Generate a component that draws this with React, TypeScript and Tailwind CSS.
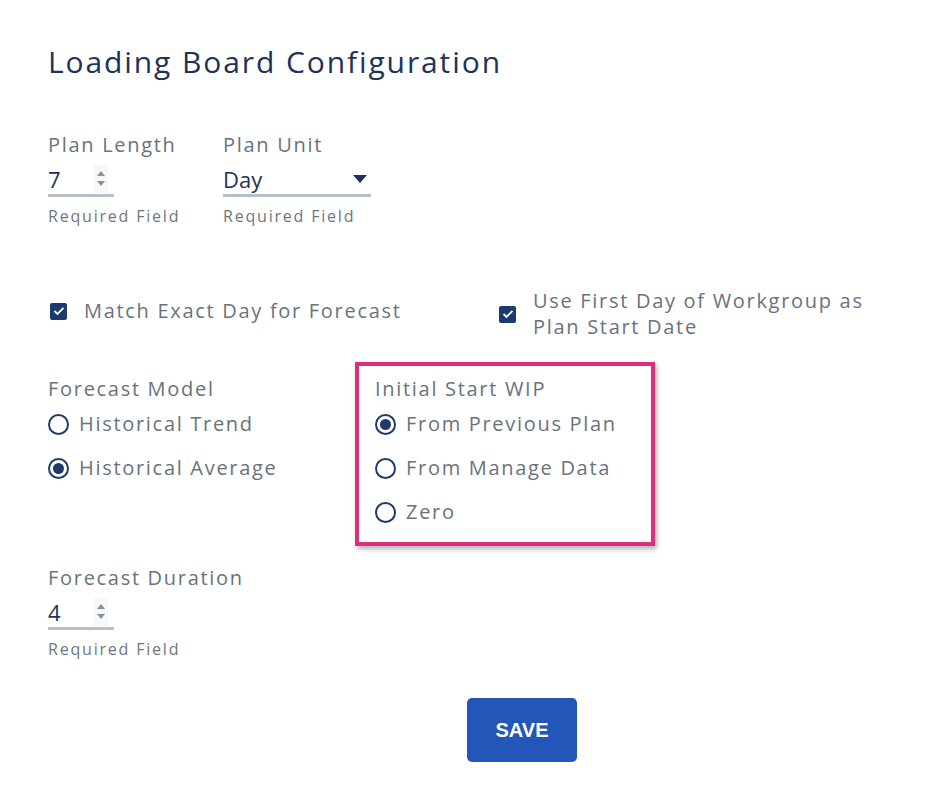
import { useState } from "react";

const font = { fontFamily: '"Open Sans", "Liberation Sans", sans-serif' };

const labelCls = "text-[20px] leading-[26px] text-[#68737b] tracking-[1.7px]";

function Spinner() {
  return (
    <svg width="14" height="28" viewBox="0 0 14 28" className="shrink-0">
      <rect x="0" y="0" width="14" height="28" fill="#f6f7f8" />
      <path d="M7 6 L11 11 L3 11 Z" fill="#8a9096" />
      <path d="M3 16 L11 16 L7 21 Z" fill="#8a9096" />
    </svg>
  );
}

function NumberField({ label, value }: { label: string; value: string }) {
  return (
    <div className="flex flex-col">
      <div className={labelCls}>{label}</div>
      <div className="mt-[9px] w-[66px] h-[30px] flex items-center justify-between border-b-[3px] border-[#b7c0c7] pr-[6px] pb-[4px]">
        <span className="text-[22px] text-[#1d3357] leading-none">{value}</span>
        <Spinner />
      </div>
      <div className="mt-[9px] text-[16px] leading-[20px] text-[#6e767d] tracking-[1.8px]">Required Field</div>
    </div>
  );
}

function Check({ children }: { children: React.ReactNode }) {
  return (
    <div className="flex items-center gap-[17px]">
      <div className="w-[17px] h-[17px] rounded-[2px] bg-[#1c3a6e] flex items-center justify-center shrink-0">
        <svg width="12" height="10" viewBox="0 0 12 10">
          <path d="M1.5 5 L4.5 8 L10.5 1.8" stroke="white" strokeWidth="1.8" fill="none" />
        </svg>
      </div>
      <div className={labelCls}>{children}</div>
    </div>
  );
}

function Radio({ label, checked, onClick }: { label: string; checked: boolean; onClick: () => void }) {
  return (
    <div className="flex items-center gap-[10px] h-[44px] cursor-pointer" onClick={onClick}>
      <div className="w-[21px] h-[21px] rounded-full border-2 border-[#1c3a6e] flex items-center justify-center">
        {checked && <div className="w-[11px] h-[11px] rounded-full bg-[#1c3a6e]" />}
      </div>
      <span className="text-[20px] text-[#68737b] tracking-[1.7px]">{label}</span>
    </div>
  );
}

export default function App() {
  const [model, setModel] = useState("avg");
  const [wip, setWip] = useState("prev");

  return (
    <div className="w-[926px] h-[794px] bg-white" style={font}>
      <div className="pl-[48px] pt-[42px]">
        <h1 className="text-[30px] leading-[40px] text-[#1d3357] tracking-[1.9px]">Loading Board Configuration</h1>

        <div className="flex mt-[50px]">
          <div className="w-[175px]">
            <NumberField label="Plan Length" value="7" />
          </div>
          <div className="flex flex-col">
            <div className={labelCls}>Plan Unit</div>
            <div className="mt-[9px] w-[148px] h-[30px] flex items-center justify-between border-b-[3px] border-[#b7c0c7] pr-[4px] pb-[4px]">
              <span className="text-[22px] text-[#1d3357] leading-none">Day</span>
              <svg width="14" height="8" viewBox="0 0 14 8">
                <path d="M0 0 L14 0 L7 8 Z" fill="#1d3357" />
              </svg>
            </div>
            <div className="mt-[9px] text-[16px] leading-[20px] text-[#6e767d] tracking-[1.8px]">Required Field</div>
          </div>
        </div>

        <div className="flex items-center mt-[62px]">
          <div className="w-[451px] pl-[2px] -mt-[6px]">
            <Check>Match Exact Day for Forecast</Check>
          </div>
          <Check>
            Use First Day of Workgroup as
            <br />
            Plan Start Date
          </Check>
        </div>

        <div className="flex mt-[22px]">
          <div className="w-[307px] pt-[14px]">
            <div className={labelCls}>Forecast Model</div>
            <Radio label="Historical Trend" checked={model === "trend"} onClick={() => setModel("trend")} />
            <Radio label="Historical Average" checked={model === "avg"} onClick={() => setModel("avg")} />
          </div>
          <div className="w-[300px] border-[4px] border-[#dd2f7d] shadow-[2px_3px_5px_rgba(0,0,0,0.3)] pl-[16px] pt-[10px] pb-[8px]">
            <div className={labelCls}>Initial Start WIP</div>
            <Radio label="From Previous Plan" checked={wip === "prev"} onClick={() => setWip("prev")} />
            <Radio label="From Manage Data" checked={wip === "manage"} onClick={() => setWip("manage")} />
            <Radio label="Zero" checked={wip === "zero"} onClick={() => setWip("zero")} />
          </div>
        </div>

        <div className="mt-[19px]">
          <NumberField label="Forecast Duration" value="4" />
        </div>

        <div className="flex pl-[419px] mt-[39px]">
          <button
            className="w-[110px] h-[64px] rounded-[5px] bg-[#2256b8] text-white text-[20px] font-bold"
            style={{ fontFamily: '"Liberation Sans", Arial, sans-serif' }}
          >
            SAVE
          </button>
        </div>
      </div>
    </div>
  );
}
